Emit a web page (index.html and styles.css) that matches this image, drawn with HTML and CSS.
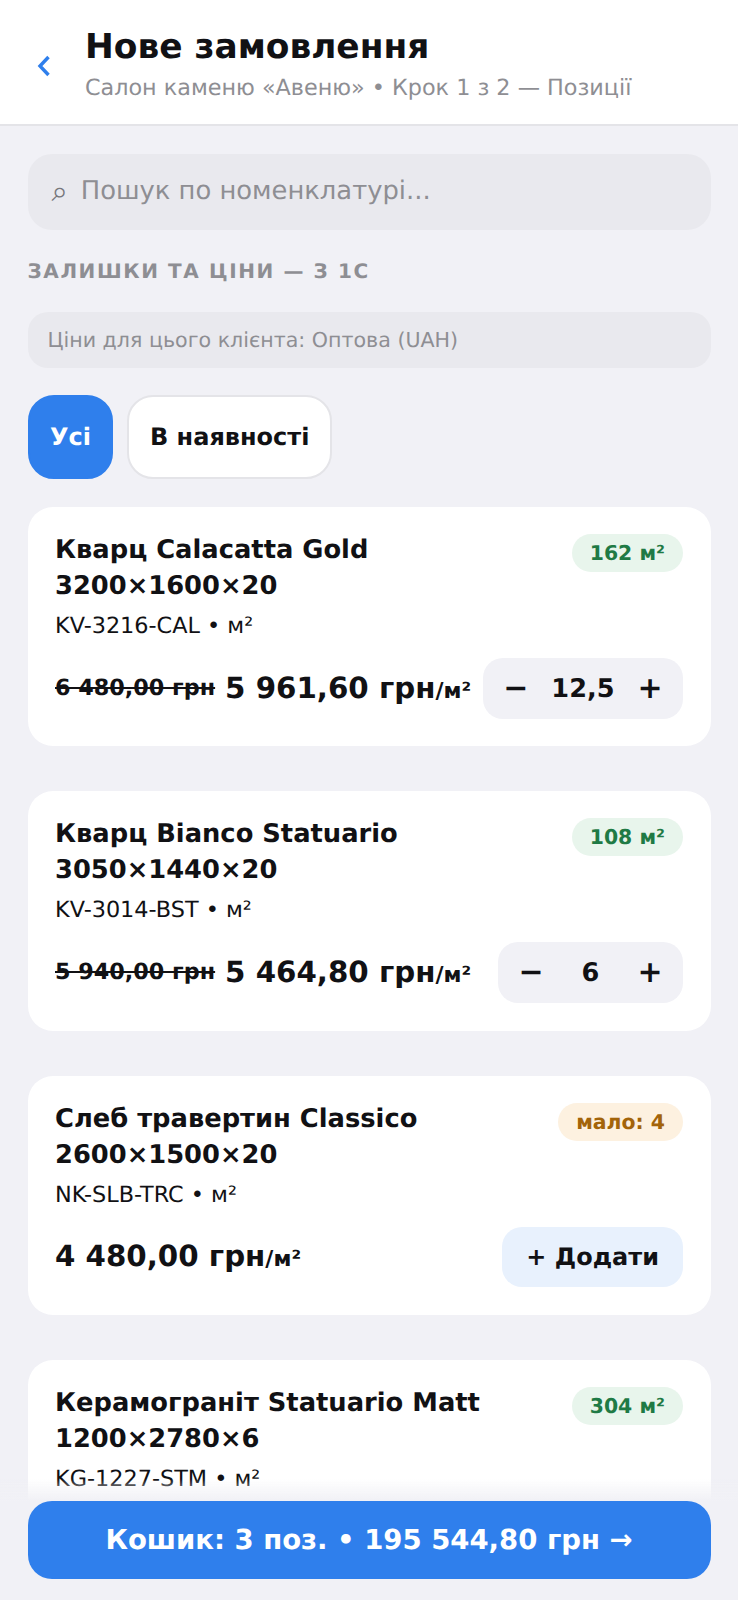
FILE: index.html
```html
<!DOCTYPE html>
<html lang="uk">
<head>
    <meta charset="UTF-8">
    <meta name="viewport" content="width=device-width, initial-scale=1.0">
    <link rel="stylesheet" href="styles.css">
    <title>Нове замовлення</title>
</head>
<body>
    <!-- header -->
    <header class="topbar">
        <svg class="back" width="16" height="24" viewBox="0 0 16 24">
            <path d="M12.5 3 L4 12 L12.5 21" fill="none" stroke="#2f7fec" stroke-width="3.4"/>
        </svg>
        <div>
            <h1 class="title">Нове замовлення</h1>
            <div class="subtitle">Салон каменю «Авеню» • Крок 1 з 2 — Позиції</div>
        </div>
    </header>

    <main class="content">
        <div class="search"><span class="search-icon">⌕</span><span>Пошук по номенклатурі...</span></div>
        <div class="section-label">ЗАЛИШКИ ТА ЦІНИ — З 1С</div>
        <div class="price-note">Ціни для цього клієнта: Оптова (UAH)</div>

        <div class="chips">
            <div class="chip active">Усі</div>
            <div class="chip">В наявності</div>
        </div>

        <!-- products -->
        <section class="card">
            <div class="card-top">
                <div class="name">Кварц Calacatta Gold<br>3200×1600×20</div>
                <span class="badge green">162 м²</span>
            </div>
            <div class="sku">KV-3216-CAL • м²</div>
            <div class="card-bottom">
                <div class="prices"><s class="old">6 480,00 грн</s><span class="price">5 961,60 грн<small>/м²</small></span></div>
                <div class="qty"><span class="step">−</span><b>12,5</b><span class="step">+</span></div>
            </div>
        </section>

        <section class="card">
            <div class="card-top">
                <div class="name">Кварц Bianco Statuario<br>3050×1440×20</div>
                <span class="badge green">108 м²</span>
            </div>
            <div class="sku">KV-3014-BST • м²</div>
            <div class="card-bottom">
                <div class="prices"><s class="old">5 940,00 грн</s><span class="price">5 464,80 грн<small>/м²</small></span></div>
                <div class="qty"><span class="step">−</span><b>6</b><span class="step">+</span></div>
            </div>
        </section>

        <section class="card">
            <div class="card-top">
                <div class="name">Слеб травертин Classico<br>2600×1500×20</div>
                <span class="badge orange">мало: 4</span>
            </div>
            <div class="sku">NK-SLB-TRC • м²</div>
            <div class="card-bottom">
                <div class="prices"><span class="price">4 480,00 грн<small>/м²</small></span></div>
                <div class="add">+ Додати</div>
            </div>
        </section>

        <section class="card">
            <div class="card-top">
                <div class="name">Керамограніт Statuario Matt<br>1200×2780×6</div>
                <span class="badge green">304 м²</span>
            </div>
            <div class="sku">KG-1227-STM • м²</div>
        </section>
    </main>

    <!-- cart button over the list -->
    <div class="cart-wrap">
        <div class="cart">Кошик: 3 поз. • 195 544,80 грн →</div>
    </div>
</body>
</html>
```

FILE: styles.css
```css
* {
    box-sizing: border-box;
}
html, body {
    margin: 0;
    height: 1600px;
    overflow: hidden;
}
body {
    background-color: #f1f1f6;
    color: #111114;
    font-family: "DejaVu Sans", sans-serif;
    text-rendering: geometricPrecision;
}
.topbar {
    display: flex;
    align-items: center;
    gap: 33px;
    height: 126px;
    padding: 5px 28px 0 36px;
    background-color: #fff;
    border-bottom: 2px solid #e4e4e8;
}
.back {
    margin-top: 3px;
}
.title {
    margin: 0;
    font-size: 34.4px;
    line-height: 42px;
    font-weight: 700;
}
.subtitle {
    margin-top: 5px;
    font-size: 22.3px;
    line-height: 30px;
    color: #8e8e93;
}
.content {
    padding: 28px 27.5px 0;
}
.search {
    display: flex;
    align-items: center;
    gap: 13px;
    height: 76px;
    padding: 0 24px 2px;
    border-radius: 24px;
    background-color: #e9e9ee;
    color: #8e8e93;
    font-size: 25.8px;
}
.search-icon {
    font-size: 29px;
    color: #77777c;
}
.section-label {
    margin-top: 28px;
    font-size: 20px;
    line-height: 26px;
    font-weight: 700;
    letter-spacing: 1.6px;
    color: #8e8e93;
}
.price-note {
    display: flex;
    align-items: center;
    height: 56px;
    margin-top: 28px;
    padding: 0 20px;
    border-radius: 20px;
    background-color: #e9e9ee;
    color: #8e8e93;
    font-size: 20.6px;
}
.chips {
    display: flex;
    gap: 14px;
    margin-top: 27px;
}
.chip {
    display: flex;
    align-items: center;
    height: 84px;
    padding: 0 20.5px;
    border: 2px solid #e4e4e8;
    border-radius: 26px;
    background-color: #fff;
    font-size: 24px;
    font-weight: 700;
}
.chip.active {
    border-color: #2f7fec;
    background-color: #2f7fec;
    color: #fff;
}
.card {
    height: 239.3px;
    margin-top: 28px;
    margin-bottom: 45px;
    padding: 25px 27.5px;
    border-radius: 25px;
    background-color: #fff;
}
.card-top {
    display: flex;
    justify-content: space-between;
    align-items: flex-start;
}
.name {
    font-size: 25.75px;
    line-height: 36px;
    font-weight: 700;
}
.badge {
    margin-top: 2px;
    padding: 6px 18px;
    border-radius: 20px;
    font-size: 20.4px;
    line-height: 26px;
    font-weight: 700;
}
.green {
    background-color: #e8f5ec;
    color: #1f7a45;
}
.orange {
    background-color: #fdf1e0;
    color: #a3640a;
}
.sku {
    margin-top: 7px;
    font-size: 22.35px;
    line-height: 30px;
}
.card-bottom {
    display: flex;
    justify-content: space-between;
    align-items: center;
    margin-top: 17px;
}
.prices {
    display: flex;
    align-items: center;
    gap: 10px;
    margin-bottom: 2px;
}
.old {
    font-size: 22.3px;
    font-weight: 700;
}
.price {
    font-size: 29.3px;
    font-weight: 700;
}
.price small {
    font-size: 22px;
}
.qty {
    display: flex;
    align-items: center;
    gap: 18.5px;
    height: 61px;
    padding: 0 16px;
    border-radius: 20px;
    background-color: #f1f1f6;
    font-size: 30px;
    font-weight: 700;
}
.qty b {
    font-size: 25.6px;
    text-align: center;
    min-width: 48px;
}
.step {
    width: 34px;
    text-align: center;
}
.add {
    display: flex;
    align-items: center;
    height: 60px;
    padding: 0 24px;
    border-radius: 20px;
    background-color: #e8f1fd;
    font-size: 24px;
    font-weight: 700;
}
.cart-wrap {
    position: fixed;
    left: 0;
    right: 0;
    bottom: 0;
    height: 121px;
    padding: 22px 27.5px 21px;
    background: linear-gradient(to bottom, rgba(241, 241, 246, 0), #f1f1f6 22px);
}
.cart {
    display: flex;
    align-items: center;
    justify-content: center;
    height: 78px;
    border-radius: 24px;
    background-color: #2f7fec;
    color: #fff;
    font-size: 27.5px;
    font-weight: 700;
}
```
